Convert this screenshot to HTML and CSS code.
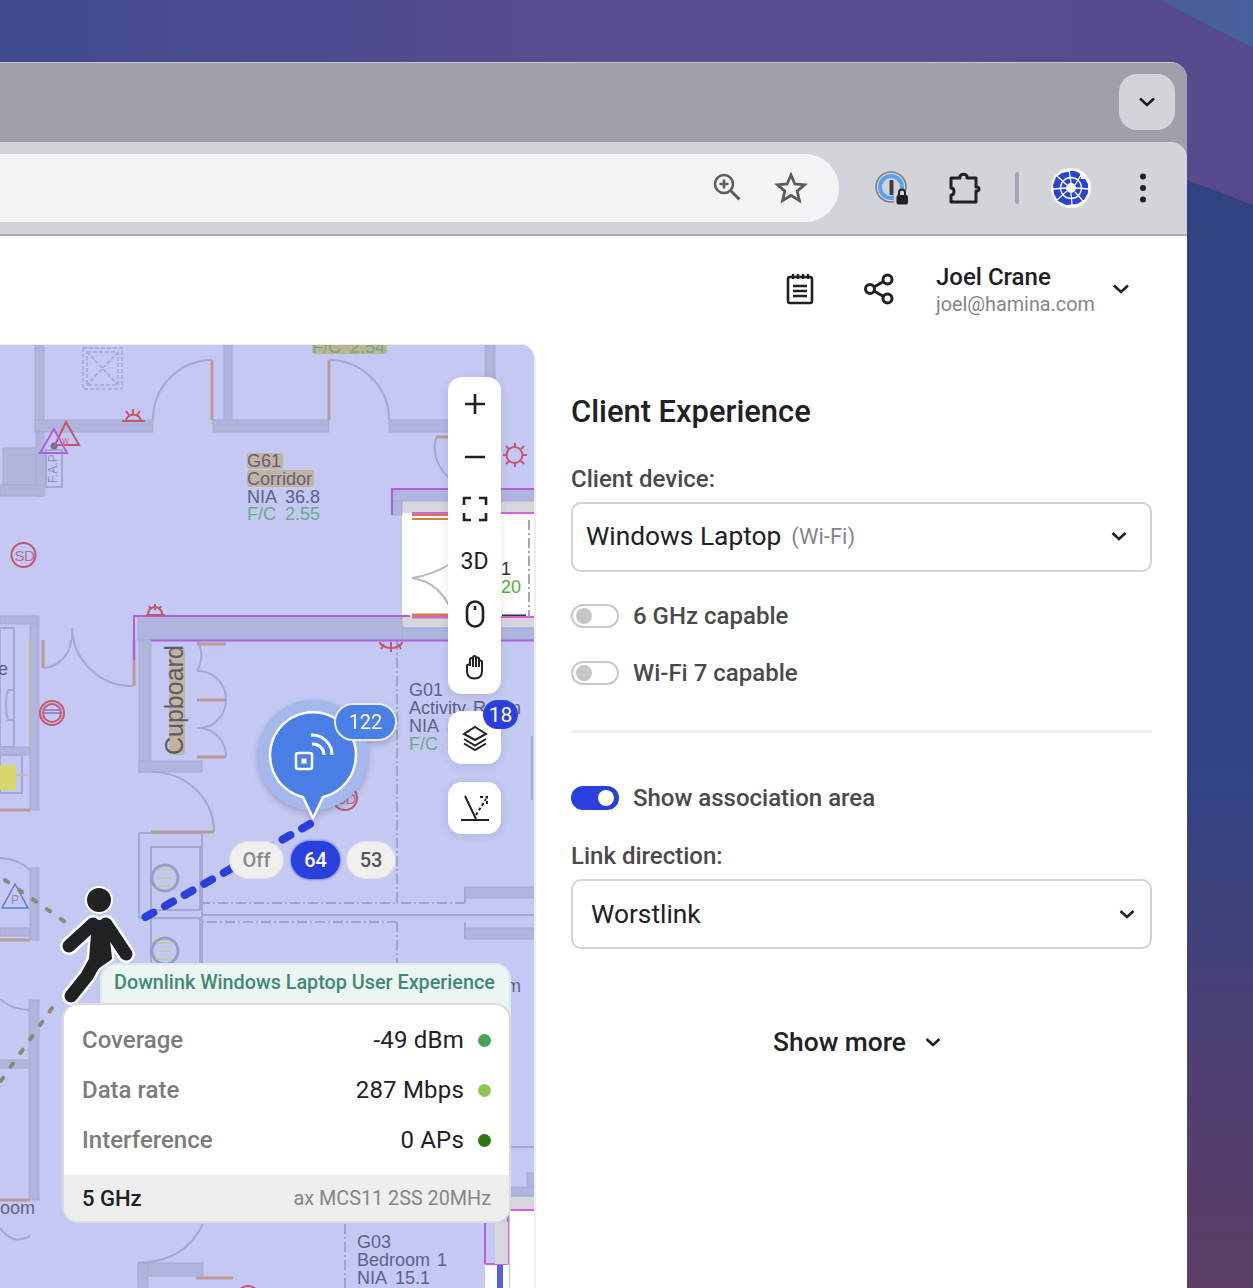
FILE: index.html
```html
<!DOCTYPE html>
<html lang="en">
<head>
<meta charset="utf-8">
<title>Client Experience</title>
<link rel="stylesheet" href="styles.css">
</head>
<body>
<div class="desktop">
  <svg class="wallpaper" viewBox="0 0 1253 1288" preserveAspectRatio="none" aria-hidden="true">
    <defs>
      <linearGradient id="wpTop" x1="0" y1="0" x2="1" y2="0"><stop offset="0" stop-color="#3f4a8f"/><stop offset=".5" stop-color="#5a4c90"/><stop offset="1" stop-color="#564a8c"/></linearGradient>
      <linearGradient id="wpLow" x1="0" y1="0" x2="0" y2="1"><stop offset="0" stop-color="#30427f"/><stop offset=".55" stop-color="#324484"/><stop offset=".8" stop-color="#4f3f73"/><stop offset="1" stop-color="#5c3e64"/></linearGradient>
      <linearGradient id="wpCorner" x1="0" y1="0" x2="1" y2="0"><stop offset="0" stop-color="#4a5c98"/><stop offset="1" stop-color="#46629c"/></linearGradient>
    </defs>
    <rect width="1253" height="1288" fill="url(#wpTop)"/>
    <path d="M1160 0H1253V48Z" fill="url(#wpCorner)"/>
    <path d="M1187 180L1253 205V1288H1187Z" fill="url(#wpLow)"/>
  </svg>

  <div class="window">
    <div class="tabbar">
      <button class="tab-menu" type="button" aria-label="Tab search">
        <svg width="20" height="20" viewBox="0 0 20 20"><path d="M3 6.500l7 6.500 7-6.500" class="ico-stroke"/></svg>
      </button>
    </div>

    <div class="toolbar">
      <div class="omnibox">
        <svg width="34" height="34" viewBox="0 0 34 34" class="omni-icon"><circle cx="14" cy="13" r="9" fill="none" stroke="#5c5d61" stroke-width="2.600"/><path d="M14 8.500v9M9.500 13h9" stroke="#5c5d61" stroke-width="2.600"/><path d="M20.500 19.500l9 9" stroke="#5c5d61" stroke-width="3"/></svg>
        <svg width="34" height="34" viewBox="0 0 34 34" class="omni-icon"><path d="M17 4l3.900 9 9.600.8-7.300 6.300 2.200 9.400L17 24.500 8.600 29.500l2.200-9.400L3.500 13.800l9.600-.8z" fill="none" stroke="#5c5d61" stroke-width="2.800" stroke-linejoin="miter"/></svg>
      </div>
      <div class="ext-icons">
        <svg class="ext-1p" width="34" height="36" viewBox="0 0 34 36"><circle cx="16" cy="17" r="15" fill="none" stroke="#7e7f86" stroke-width="1.600"/><circle cx="16" cy="17" r="11" fill="none" stroke="#5da2f2" stroke-width="4"/><rect x="14.500" y="10" width="4" height="15" rx="1" fill="#3c3d42"/><rect x="19" y="20" width="15" height="16" fill="#d3d4da"/><rect x="21.500" y="25" width="11.500" height="9.500" rx="2" fill="#202124"/><path d="M24 25v-2.500a3 3 0 0 1 6 0V25" fill="none" stroke="#202124" stroke-width="2"/></svg>
        <svg class="ext-puzzle" width="34" height="34" viewBox="0 0 34 34"><path d="M4 7h9c-1-5 8-5 7 0h9v9c4-1 4 5 0 4v11H4v-7c4 0 4-7 0-7z" fill="none" stroke="#202124" stroke-width="3" stroke-linejoin="round"/></svg>
        <span class="ext-divider"></span>
        <svg class="ext-avatar" width="40" height="42" viewBox="0 0 40 42"><circle cx="20" cy="21" r="20" fill="#fff"/><path d="M20 4c4-.500 7 .500 9 3l1 5 4 0 3 5 0 9-4 7-7 4-11 1-8-4-4-7-1-9 3-8 6-4z" fill="#2a42dc"/><g stroke="#fff" stroke-width="1.300" fill="none"><circle cx="20" cy="21" r="10.500"/><path d="M20 16L18 3M24 18l6-10M25 21l13 1M24 25l8 9M20 26l1 12M16 24L6 33M15 21L2 22M16 18L6 9"/></g><circle cx="20" cy="21" r="5" fill="#fff"/></svg>
        <svg class="ext-kebab" width="8" height="30" viewBox="0 0 8 30"><circle cx="4" cy="3.500" r="3" fill="#202124"/><circle cx="4" cy="15" r="3" fill="#202124"/><circle cx="4" cy="26.500" r="3" fill="#202124"/></svg>
      </div>
    </div>

    <div class="page">
      <header class="app-header">
        <svg class="hdr-ico" width="28" height="33" viewBox="0 0 28 33"><rect x="2" y="5" width="24" height="26" rx="2" fill="none" stroke="#202124" stroke-width="2.600"/><path d="M7 2v5M12 2v5M17 2v5M22 2v5M7 14h14M7 19h14M7 24h14" stroke="#202124" stroke-width="2.400"/></svg>
        <svg class="hdr-ico" width="32" height="32" viewBox="0 0 32 32"><g fill="none" stroke="#202124" stroke-width="3"><circle cx="7" cy="16" r="4.500"/><circle cx="24.500" cy="6.500" r="4.500"/><circle cx="24.500" cy="25.500" r="4.500"/><path d="M11 14l9.500-5.500M11 18l9.500 5.500"/></g></svg>
        <div class="user">
          <div class="user-name">Joel Crane</div>
          <div class="user-mail">joel@hamina.com</div>
        </div>
        <svg class="user-chev" width="18" height="18" viewBox="0 0 18 18"><path d="M2 5.500l7 6.500 7-6.500" class="ico-stroke"/></svg>
      </header>

      <div class="workspace">
        <section class="map">
          <svg class="plan" width="535" height="944" viewBox="0 344 535 944" aria-hidden="true">
            <rect x="0" y="344" width="535" height="944" fill="#c4c9f3"/>
            <!-- white service room -->
            <rect x="402" y="501" width="133" height="126" fill="#d6d6dc"/>
            <rect x="402" y="513" width="133" height="104" fill="#fff"/>
            <!-- walls -->
            <g class="wall">
              <rect x="35" y="344" width="9" height="76"/>
              <rect x="35" y="420" width="118" height="12"/>
              <rect x="213" y="420" width="116" height="12"/>
              <rect x="224" y="344" width="8" height="76"/>
              <rect x="389" y="420" width="62" height="12"/>
              <rect x="485" y="344" width="10" height="40"/>
              <rect x="36" y="432" width="8" height="64"/>
              <rect x="0" y="485" width="44" height="11"/>
              <rect x="3" y="448" width="33" height="37"/>
              <rect x="392" y="489" width="143" height="12"/>
              <rect x="392" y="501" width="10" height="14"/>
              <rect x="138" y="616" width="264" height="24"/>
              <rect x="402" y="628" width="133" height="12"/>
              <rect x="139" y="640" width="12" height="132"/>
              <rect x="139" y="761" width="63" height="11"/>
              <rect x="30" y="616" width="9" height="194"/>
              <rect x="0" y="616" width="36" height="8"/>
              <rect x="0" y="747" width="30" height="8"/>
              <rect x="30" y="868" width="9" height="72"/>
              <rect x="0" y="928" width="30" height="8"/>
              <rect x="29" y="1000" width="10" height="200"/>
              <rect x="0" y="1060" width="30" height="8"/>
              <rect x="465" y="887" width="70" height="11"/>
              <rect x="465" y="928" width="70" height="11"/>
              <rect x="510" y="1187" width="25" height="9"/>
              <rect x="527" y="1173" width="8" height="14"/>
              <rect x="138" y="1263" width="65" height="13"/>
              <rect x="138" y="1263" width="10" height="30"/>
            </g>
            <rect x="510" y="1197" width="25" height="13" fill="#d6d6dc"/>
            <!-- hairlines and door swings -->
            <g class="line">
              <path d="M212 360A59 60 0 0 0 153 420M329 360A60 60 0 0 1 389 420M436 437A40 40 0 0 0 452 480"/>
              <path d="M46 450H62V487H46Z"/>
              <path d="M139 833H202V918M139 833V918H202M151 847H200V910H151ZM151 918H200V990H151Z"/>
              <path d="M152 772A62 60 0 0 1 214 832"/>
              <path d="M133 686A60 60 0 0 1 72 628M72 628V640M44 668A30 30 0 0 0 71 640"/>
              <path d="M197 671A30 30 0 0 0 197 640M197 671A28 28 0 0 1 226 700A28 28 0 0 1 197 728A28 28 0 0 1 226 757"/>
              <path d="M0 858A40 30 0 0 1 30 870M0 999A40 30 0 0 0 30 1010M0 1228C12 1244 22 1240 30 1236M203 1224C190 1250 170 1262 138 1263"/>
              <path d="M202 915H535M465 887V903M465 922V939M510 1147H535"/>
              <path d="M532 736V800"/>
              <rect x="0" y="628" width="14" height="119"/>
              <rect x="0" y="755" width="22" height="38"/>
              <path d="M14 690H8a6 20 0 0 0 0 30H14"/>
              <path d="M202 833V1000"/>
            </g>
            <g class="loo">
              <circle cx="165" cy="878" r="13"/><circle cx="165" cy="951" r="13"/>
            </g>
            <path d="M156 870l16 0M156 886l16 0M158 878h14M156 943l16 0M156 959l16 0M158 951h14" stroke="#c9c98e" stroke-width="1.500" fill="none"/>
            <g class="line-thin">
              <path d="M83 348H122V389H83ZM87 352H118V385H87ZM87 352L118 385M118 352L87 385" stroke-dasharray="4 2"/>
            </g>
            <g class="dash">
              <path d="M397 640V903H202M465 903H397M397 922H202M397 922V1000M345 1224V1288"/>
              <path d="M529 520V617"/>
            </g>
            <!-- coloured partitions -->
            <g class="orange">
              <path d="M212 360V420M329 360V420M436 437H451M134 640V686M43 640V668"/>
              <path d="M197 644H226M197 700H226M197 757H226M151 832H214M0 810H30M0 940H30M0 1200H30M196 1278H233"/>
            </g>
            <path d="M412 515H452M412 519H452" stroke="#cc8140" stroke-width="2"/>
            <path d="M412 616H452" stroke="#cc8140" stroke-width="5"/>
            <path d="M502 616H526" stroke="#333" stroke-width="3"/>
            <path d="M412 578Q430 576 452 563M412 578Q440 582 452 612" fill="none" stroke="#b8b8b8" stroke-width="2"/>
            <path d="M30 640V747M0 775H28" stroke="#c0c28a" stroke-width="1.500" fill="none"/>
            <rect x="0" y="765" width="16" height="25" fill="#d8d56a"/>
            <g class="purple">
              <path d="M392 515V489H535M134 660V616H410M151 640.500H535M485 1223V1264"/>
            </g>
            <path d="M412 513H535M412 617H535M510 1210H535M508 1210V1264M485 1264H508" fill="none" stroke="#d95fe0" stroke-width="2"/>
            <rect x="510" y="1211" width="25" height="77" fill="#fff"/>
            <rect x="495" y="1222" width="13" height="42" fill="#d6d6dc"/>
            <rect x="485" y="1265" width="24" height="23" fill="#fff"/>
            <rect x="497" y="1265" width="6" height="23" fill="#5762d0"/>
            <!-- symbols -->
            <g class="red">
              <circle cx="23.500" cy="555" r="12"/>
              <path d="M122 421H145M126 420a8 8 0 0 1 15 0M133 409v5M126 411l3 4M140 411l-3 4"/>
              <path d="M146 615H165M148 614a7 7 0 0 1 14 0M155 604v6M149 606l2 4M161 606l-2 4"/>
              <path d="M66 422L79 445H55Z"/>
              <circle cx="514.500" cy="455" r="8"/>
              <path d="M515 443v4M515 463v4M503 455h4M523 455h4M506 446l3 3M521 461l3 3M524 446l-3 3M509 461l-3 3"/>
              <path d="M380 642a11 6 0 0 0 22 0M391 642v10M384 644l-3 5M398 644l3 5"/>
              <circle cx="52" cy="713" r="12"/><circle cx="52" cy="713" r="9"/>
              <circle cx="345" cy="798" r="12"/>
              <circle cx="248" cy="1298" r="12"/>
            </g>
            <path d="M54 429L67 453H40Z" fill="none" stroke="#b060dc" stroke-width="2"/>
            <circle cx="54" cy="446" r="3.500" fill="#7f6f8f"/>
            <path d="M15 884L28 908H2Z" fill="none" stroke="#5c78d8" stroke-width="1.500"/>
            <path d="M44 713h16M44 710h16" stroke="#8f72c4" stroke-width="1.500"/>
            <!-- room labels -->
            <rect x="247" y="453" width="36" height="16" rx="3" fill="#c4b49f"/>
            <rect x="247" y="470" width="67" height="17" rx="3" fill="#c4b49f"/>
            <rect x="312" y="344" width="75" height="10" rx="3" fill="#b9b68f"/>
            <rect x="169" y="647" width="16" height="108" rx="4" fill="#c4b49f"/>
            <text class="rm" x="247" y="467">G61</text>
            <text class="rm" x="247" y="485">Corridor</text>
            <text class="rm rm-gap" x="247" y="503">NIA 36.8</text>
            <text class="rm rm-fc rm-gap" x="247" y="520">F/C 2.55</text>
            <text class="rm rm-fc rm-gap" x="312" y="353">F/C 2.54</text>
            <text class="rm" x="409" y="696">G01</text>
            <text class="rm" x="409" y="714">Activity Room</text>
            <text class="rm rm-gap" x="409" y="732">NIA 31.2</text>
            <text class="rm rm-fc rm-gap" x="409" y="750">F/C 3.11</text>
            <text class="rm" x="357" y="1248">G03</text>
            <text class="rm" x="357" y="1266">Bedroom 1</text>
            <text class="rm rm-gap" x="357" y="1284">NIA 15.1</text>
            <text class="rm" x="0" y="1214">oom</text>
            <text class="rm" x="506" y="992">m</text>
            <text class="rm" x="-2" y="675">e</text>
            <text class="rm rm-dark" x="501" y="575">1</text>
            <text class="rm rm-green" x="501" y="593">20</text>
            <text class="rm rm-cup" transform="translate(183 755) rotate(-90)">Cupboard</text>
            <text class="rm rm-tiny" transform="translate(57 483) rotate(-90)">F.A.P</text>
            <text class="rm rm-sd" x="14.500" y="561">SD</text>
            <text class="rm rm-sd" x="336" y="804">SD</text>
            <text class="rm rm-tiny" x="11" y="904">P</text>
            <text class="rm rm-w" x="62" y="444">w</text>
            <!-- gray walking path -->
            <path d="M5 880L71 926" class="trail"/>
            <path d="M52 1008L0 1082" class="trail"/>
            <!-- blue walking path -->
            <path d="M310 824L135 923" class="route"/>
          </svg>

          <!-- the walking person -->
          <svg class="person" width="80" height="126" viewBox="0 0 80 126" aria-hidden="true">
            <g class="person-halo">
              <circle cx="39" cy="16" r="12"/>
              <path d="M33 40L9 62M46 40L66 70M38 72L27 92L11 112"/>
              <path d="M34 38H46L50 74L30 88Z"/>
            </g>
            <g class="person-body">
              <circle cx="39" cy="16" r="12"/>
              <path d="M33 40L9 62M46 40L66 70M38 72L27 92L11 112"/>
              <path d="M34 38H46L50 74L30 88Z"/>
            </g>
          </svg>

          <!-- access point pin -->
          <div class="pin">
            <svg width="116" height="126" viewBox="0 0 116 126" aria-hidden="true">
              <circle cx="57" cy="56" r="55.500" fill="#a5b8ec"/>
              <path d="M57 119L47 98A43 43 0 1 1 67 98Z" fill="#4a7fe5" stroke="#fff" stroke-width="2.500" stroke-linejoin="round"/>
              <rect x="40" y="54" width="16" height="16" rx="2" fill="none" stroke="#fff" stroke-width="2.500"/>
              <rect x="45.500" y="59.500" width="5" height="5" fill="#fff"/>
              <path d="M56 45a11 11 0 0 1 12 11M55 36a20 20 0 0 1 21 20" fill="none" stroke="#fff" stroke-width="3"/>
            </svg>
            <span class="pin-count">122</span>
          </div>

          <div class="channels">
            <span class="chan chan-off">Off</span>
            <span class="chan chan-on">64</span>
            <span class="chan">53</span>
          </div>

          <!-- map controls -->
          <div class="ctl-group">
            <button class="ctl" type="button"><svg width="24" height="24" viewBox="0 0 24 24"><path d="M12 2v20M2 12h20" class="ctl-line"/></svg></button>
            <button class="ctl" type="button"><svg width="24" height="24" viewBox="0 0 24 24"><path d="M2 12h20" class="ctl-line"/></svg></button>
            <button class="ctl" type="button"><svg width="26" height="26" viewBox="0 0 26 26"><path d="M2 9V2h7M17 2h7v7M24 17v7h-7M9 24H2v-7" class="ctl-line"/></svg></button>
            <button class="ctl ctl-text" type="button">3D</button>
            <button class="ctl" type="button"><svg width="20" height="28" viewBox="0 0 20 28"><rect x="2" y="1.500" width="16" height="25" rx="8" class="ctl-line"/><path d="M10 6v4" class="ctl-line"/></svg></button>
            <button class="ctl" type="button"><svg width="22" height="26" viewBox="0 0 22 26"><path d="M3 17v-5a1.500 1.500 0 0 1 3 0V5.500a1.500 1.500 0 0 1 3 0V13V3.500a1.500 1.500 0 0 1 3 0V13V5a1.500 1.500 0 0 1 3 0V13V8a1.500 1.500 0 0 1 3 0v9c0 5-3 7.500-7.500 7.500S3 22 3 17Z" class="ctl-line ctl-thin"/></svg></button>
          </div>
          <div class="ctl-single ctl-layers">
            <svg width="26" height="26" viewBox="0 0 26 26"><path d="M13 2L24 9 13 15 2 9Z" class="ctl-line ctl-thin"/><path d="M2 14l11 6.500L24 14M2 18.500L13 25l11-6.500" class="ctl-line ctl-thin"/></svg>
            <span class="ctl-badge">18</span>
          </div>
          <div class="ctl-single ctl-angle">
            <svg width="30" height="30" viewBox="0 0 30 30"><path d="M1 27h28M5 3l11 23" class="ctl-line ctl-thin"/><path d="M16 22L26 6M20 4h7v7" class="ctl-line ctl-thin" stroke-dasharray="3 2.500"/></svg>
          </div>

          <!-- client tooltip -->
          <div class="tip">
            <div class="tip-tab">Downlink Windows Laptop User Experience</div>
            <div class="tip-card">
              <div class="tip-rows">
                <div class="tip-row"><span class="tip-key">Coverage</span><span class="tip-val">-49 dBm</span><i class="dot dot-a"></i></div>
                <div class="tip-row"><span class="tip-key">Data rate</span><span class="tip-val">287 Mbps</span><i class="dot dot-b"></i></div>
                <div class="tip-row"><span class="tip-key">Interference</span><span class="tip-val">0 APs</span><i class="dot dot-c"></i></div>
              </div>
              <div class="tip-foot"><span class="tip-band">5 GHz</span><span class="tip-mcs">ax MCS11 2SS 20MHz</span></div>
            </div>
          </div>
        </section>

        <aside class="side">
          <h2 class="side-title">Client Experience</h2>
          <label class="field-label">Client device:</label>
          <div class="select">
            <span class="select-text">Windows Laptop</span><span class="select-sub">(Wi-Fi)</span>
            <svg class="select-chev" width="18" height="18" viewBox="0 0 18 18"><path d="M2.500 6l6.500 6 6.500-6" class="ico-stroke"/></svg>
          </div>
          <div class="toggle-row toggle-first"><span class="toggle"></span><span class="toggle-label">6 GHz capable</span></div>
          <div class="toggle-row toggle-second"><span class="toggle"></span><span class="toggle-label">Wi-Fi 7 capable</span></div>
          <hr class="rule">
          <div class="toggle-row toggle-assoc"><span class="toggle toggle-on"></span><span class="toggle-label">Show association area</span></div>
          <label class="field-label field-link">Link direction:</label>
          <div class="select select-link">
            <span class="select-text">Worstlink</span>
            <svg class="select-chev" width="18" height="18" viewBox="0 0 18 18"><path d="M2.500 6l6.500 6 6.500-6" class="ico-stroke"/></svg>
          </div>
          <div class="more"><span>Show more</span><svg width="18" height="18" viewBox="0 0 18 18"><path d="M2.500 6l6.500 6 6.500-6" class="ico-stroke"/></svg></div>
        </aside>
      </div>
    </div>
  </div>
</div>
</body>
</html>
```

FILE: styles.css
```css
* { box-sizing: border-box; }
html, body { margin: 0; padding: 0; }
body { font-family: Roboto, "Liberation Sans", sans-serif; color: #202124; }

.desktop { position: relative; width: 1253px; height: 1288px; overflow: hidden; }
.wallpaper { position: absolute; inset: 0; width: 100%; height: 100%; }

.ico-stroke { fill: none; stroke: #202124; stroke-width: 2.600; }

.window {
  position: absolute; left: 0; top: 62px; width: 1187px; height: 1240px;
  border-radius: 0 16px 0 0; overflow: hidden;
  display: flex; flex-direction: column; background: #9fa0ab;
  border-top: 1px solid #c6c7ce;
}

.tabbar {
  height: 79px; flex: none; background: #9fa0ab;
  display: flex; justify-content: flex-end; padding: 11px 12px 0 0;
}
.tab-menu {
  width: 56px; height: 56px; border: 0; border-radius: 18px; background: #d3d4da;
  display: flex; align-items: center; justify-content: center; padding: 0;
}

.toolbar {
  height: 94px; flex: none; background: #d3d4da;
  border-radius: 0 16px 0 0;
  border-bottom: 2px solid #a9a9b0;
  display: flex; align-items: flex-start; padding-top: 12px;
}
.omnibox {
  width: 839px; height: 68px; flex: none; background: #f3f4f6;
  border-radius: 0 34px 34px 0;
  display: flex; align-items: center; justify-content: flex-end;
  gap: 30px; padding-right: 31px;
}
.omni-icon { display: block; }
.ext-icons { position: relative; flex: 1; height: 68px; display: flex; align-items: center; }
.ext-1p { margin-left: 36px; }
.ext-puzzle { margin-left: 38px; }
.ext-divider { width: 4px; height: 32px; background: #a5a6b2; border-radius: 2px; margin-left: 34px; }
.ext-avatar { margin-left: 32px; }
.ext-kebab { margin-left: 48px; }

.page { flex: 1; display: flex; flex-direction: column; background: #fff; min-height: 0; }

.app-header {
  height: 108px; flex: none; display: flex; align-items: center;
  justify-content: flex-end; padding: 0 57px 3px 0;
}
.hdr-ico { display: block; }
.hdr-ico:first-child { margin-right: 0; }
.hdr-ico + .hdr-ico { margin-left: 49px; margin-right: 41px; }
.user { width: 176px; margin-top: 2px; }
.user-name { font-size: 24px; line-height: 30px; font-weight: 500; color: #202124; }
.user-mail { font-size: 19.800px; line-height: 24px; margin-top: 1px; color: #85858a; }
.user-chev { display: block; }

.workspace { flex: 1; display: flex; min-height: 0; }

.map {
  position: relative; width: 536px; flex: none; height: 944px;
  border-radius: 0 16px 0 0; overflow: hidden;
  background: #c4c9f3;
  border-right: 2px solid #eeeef2;
}
.map::after {
  content: ""; position: absolute; left: 0; right: 0; top: 0; height: 1px; background: #ecedf1;
}
.plan { position: absolute; left: 0; top: 0; display: block; }

.wall rect { fill: #b0b5de; stroke: #a6abd4; stroke-width: 1; }
.line, .line-thin { fill: none; stroke: #a4a9d2; stroke-width: 2; }
.line-thin { stroke-width: 1.500; }
.loo { fill: none; stroke: #999ec6; stroke-width: 3; }
.dash { fill: none; stroke: #a0a4c8; stroke-width: 2; stroke-dasharray: 10 3 2 3; }
.orange { fill: none; stroke: #bd9a98; stroke-width: 3; }
.purple { fill: none; stroke: #b060dc; stroke-width: 2; }
.red { fill: none; stroke: #c4566f; stroke-width: 2; }

.rm { font-family: "Liberation Sans", Arial, sans-serif; font-size: 18px; word-spacing: 2px; fill: #5d6187; }
.rm-gap { word-spacing: 4px; }
.rm-fc { fill: #6fa88c; }
.rm-dark { fill: #333; }
.rm-green { fill: #4caf3c; }
.rm-cup { font-size: 25px; fill: #5a5c70; }
.rm-tiny { font-size: 12px; fill: #8a8fb8; }
.rm-sd { font-size: 15px; letter-spacing: -.5px; fill: #b0708c; }
.rm-w { font-size: 10px; fill: #d0705a; }

.trail { fill: none; stroke: #8a8a78; stroke-width: 4; stroke-dasharray: 4 13; stroke-linecap: round; }
.route { fill: none; stroke: #2a3fdc; stroke-width: 8; stroke-dasharray: 9 13.500; stroke-linecap: round; }

.person { position: absolute; left: 60px; top: 540px; }
.person-halo { fill: #fff; stroke: #fff; stroke-width: 18; stroke-linecap: round; stroke-linejoin: round; }
.person-halo circle { stroke-width: 4; }
.person-body { fill: #202124; stroke: #202124; stroke-width: 13; stroke-linecap: round; stroke-linejoin: round; }
.person-body circle { stroke: none; }
.person path:last-child { stroke-width: 4; }
.person-halo path:last-child { stroke-width: 9; }
.person path:nth-of-type(1) { fill: none; }

.pin { position: absolute; left: 256px; top: 355px; width: 116px; height: 126px; filter: drop-shadow(0 3px 3px rgba(40, 40, 80, .25)); }
.pin svg { display: block; }
.pin-count {
  position: absolute; left: 78px; top: 4px; width: 63px; height: 38px;
  border-radius: 19px; background: #4a7fe5; border: 2px solid #e8eefc;
  color: #fff; font-size: 20px; display: flex; align-items: center; justify-content: center;
}

.channels { position: absolute; left: 229px; top: 497px; display: flex; gap: 6px; }
.chan {
  width: 50px; height: 38px; border-radius: 19px; background: #efefef;
  border: 1px solid #dcdce4;
  color: #555; font-size: 20px; font-weight: 500;
  display: flex; align-items: center; justify-content: center;
}
.chan-off { width: 55px; color: #8a8a8a; margin-right: 1px; }
.chan-on { background: #2a3fdc; border-color: #2a3fdc; color: #fff; box-shadow: 0 0 3px #2a3fdc; width: 49px; }

.ctl-group {
  position: absolute; left: 448px; top: 33px; width: 53px; height: 317px;
  background: #fff; border-radius: 14px; box-shadow: 0 2px 10px rgba(40, 40, 80, .12);
  display: flex; flex-direction: column; padding: 1px 0;
}
.ctl { flex: 1; border: 0; background: none; padding: 0; display: flex; align-items: center; justify-content: center; color: #202124; }
.ctl-text { font: 400 23px Roboto, sans-serif; }
.ctl-line { fill: none; stroke: #202124; stroke-width: 2.600; }
.ctl-thin { stroke-width: 2; }
.ctl-single {
  position: absolute; left: 448px; width: 53px; background: #fff; border-radius: 14px;
  box-shadow: 0 2px 10px rgba(40, 40, 80, .12);
  display: flex; align-items: center; justify-content: center;
}
.ctl-layers { top: 367px; height: 53px; }
.ctl-angle { top: 438px; height: 52px; }
.ctl-badge {
  position: absolute; left: 35px; top: -11px; width: 35px; height: 29px; border-radius: 15px;
  background: #2a3fdc; color: #fff; font-size: 21px;
  display: flex; align-items: center; justify-content: center;
}

.tip { position: absolute; left: 62px; top: 619px; width: 449px; height: 260px; }
.tip-tab {
  position: absolute; left: 38px; top: 0; right: 0; height: 60px;
  background: #ecf5f3; border: 2px solid #d8ebe6; border-radius: 16px 16px 0 0;
  padding: 6px 0 0 12px;
  color: #3f8a75; font-size: 19.800px; line-height: 24px; font-weight: 500; white-space: nowrap;
}
.tip-card {
  position: absolute; left: 0; right: 0; top: 40px; height: 220px;
  background: #fff; border: 2px solid #dcdcdc; border-radius: 16px; overflow: hidden;
  display: flex; flex-direction: column;
}
.tip-rows { flex: 1; padding: 10px 18px 0 18px; }
.tip-row { height: 50px; display: flex; align-items: center; font-size: 24px; font-weight: 400; }
.tip-key { flex: 1; color: #7c7c7c; font-weight: 500; }
.tip-val { color: #202124; letter-spacing: .2px; }
.dot { width: 13px; height: 13px; border-radius: 50%; margin-left: 14px; }
.dot-a { background: #43a551; }
.dot-b { background: #8fc64e; }
.dot-c { background: #2f7516; }
.tip-foot {
  height: 46px; flex: none; background: #eeeeee;
  display: flex; align-items: center; justify-content: space-between;
  padding: 0 18px;
}
.tip-band { font-size: 22px; color: #202124; font-weight: 500; }
.tip-mcs { font-size: 19.800px; color: #85858a; }

.side { flex: none; width: 651px; padding: 48px 35px 0 35px; }
.side-title { margin: 0; font-size: 30.900px; line-height: 40px; font-weight: 500; color: #202124; }
.field-label { display: block; margin-top: 32px; font-size: 24px; line-height: 30px; font-weight: 500; color: #4a4a4a; }
.select {
  margin-top: 8px; height: 70px; border: 2px solid #d4d4d4; border-radius: 10px;
  display: flex; align-items: center; padding: 0 22px 2px 13px;
}
.select-text { font-size: 26.300px; color: #202124; }
.select-sub { margin-left: 10px; font-size: 22px; color: #85858a; }
.select-chev { margin-left: auto; }
.select-link { padding: 0 14px 0 18px; }
.toggle-row { display: flex; align-items: center; gap: 14px; height: 30px; }
.toggle-first { margin-top: 29px; }
.toggle-second { margin-top: 27px; }
.toggle {
  position: relative; width: 48px; height: 24px; flex: none; border: 2px solid #c8c8c8; border-radius: 12px; background: #fff;
}
.toggle::after {
  content: ""; position: absolute; left: 3px; top: 2px; width: 16px; height: 16px; border-radius: 50%; background: #c6c6c6;
}
.toggle-on { background: #2a3fdc; border-color: #2a3fdc; }
.toggle-on::after { left: auto; right: 3px; background: #fff; }
.toggle-label { font-size: 24px; font-weight: 500; color: #4a4a4a; }
.rule { margin: 42px 0 0; border: 0; height: 3px; background: #eeeeee; }
.toggle-assoc { margin-top: 50px; }
.field-link { margin-top: 28px; }
.more {
  margin-top: 75px; display: flex; justify-content: center; align-items: center; gap: 18px;
  font-size: 26.400px; font-weight: 500; color: #202124; height: 36px; padding-right: 8px;
}
```
